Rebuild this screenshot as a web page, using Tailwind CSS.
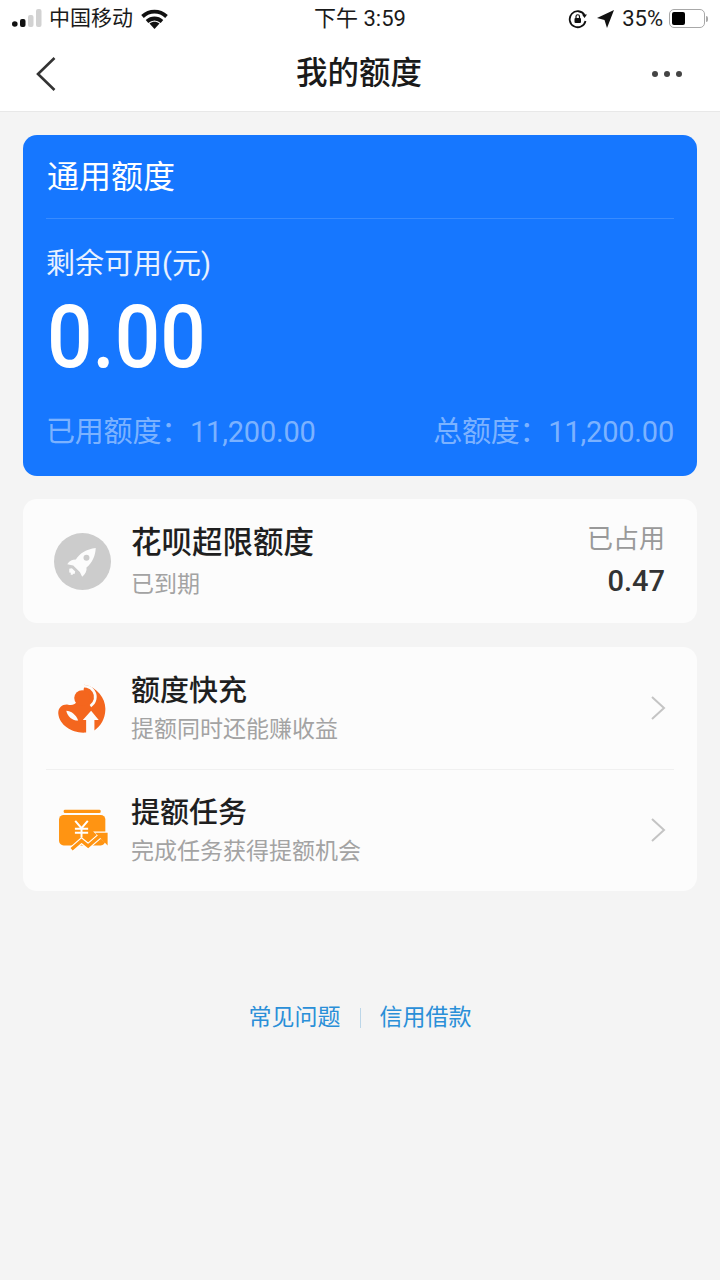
<!DOCTYPE html>
<html lang="zh-CN">
<head>
<meta charset="UTF-8">
<title>我的额度</title>
<script src="https://cdn.jsdelivr.net/npm/@tailwindcss/browser@4"></script>
</head>
<body class="bg-[#f4f4f4] font-['Roboto','Noto_Sans_CJK_SC',sans-serif]">
<div class="w-[720px] h-[1280px] flex flex-col overflow-hidden">

  <!-- status bar + nav -->
  <header class="h-[112px] bg-white border-b border-[#e8e8e8] shrink-0">
    <div class="h-[36px] pt-[1px] grid grid-cols-[1fr_auto_1fr] items-center text-[21px] text-[#1a1a1a]">
      <div class="flex items-center pl-[12px] gap-[7px]">
        <svg width="30" height="20" viewBox="0 0 30 20">
          <circle cx="2.800" cy="15" r="2.800" fill="#111"/>
          <rect x="8" y="10" width="5.500" height="8" rx="2" fill="#111"/>
          <rect x="16" y="6" width="5.500" height="12" rx="2" fill="#d2d2d2"/>
          <rect x="24" y="0" width="5.500" height="18" rx="2" fill="#d2d2d2"/>
        </svg>
        <span class="leading-none">中国移动</span>
        <svg class="ml-[1px]" width="27" height="20" viewBox="0 0 27 20" fill="none" stroke="#111" stroke-width="3.800">
          <path d="M1.500 7.500C8.500 1 18.500 1 25.500 7.500"/>
          <path d="M6 12.500C10.500 8.500 16.500 8.500 21 12.500"/>
          <path d="M13.500 20l-5-5.500c3-2.200 7-2.200 10 0z" fill="#111" stroke="none"/>
        </svg>
      </div>
      <div class="text-center leading-none text-[22px]">下午 3:59</div>
      <div class="flex items-center justify-end pr-[12px]">
        <svg width="20" height="20" viewBox="0 0 20 20" fill="none">
          <path d="M16.500 6A8 8 0 1 0 17.500 12" stroke="#111" stroke-width="1.800"/>
          <path d="M14 5.500h5l-2.500 3.500z" fill="#111"/>
          <rect x="6.500" y="9" width="6.500" height="5" rx="1" fill="#111"/>
          <path d="M8 9V7.500a1.500 1.500 0 0 1 3.500 0V9" stroke="#111" stroke-width="1.200"/>
        </svg>
        <svg class="ml-[9px]" width="17" height="18" viewBox="0 0 17 18"><path d="M17 0L10 18 7.500 10 0 8z" fill="#111"/></svg>
        <span class="leading-none ml-[8px] text-[22px]">35%</span>
        <div class="flex items-center ml-[6px]">
          <div class="w-[36px] h-[19px] border border-[#a8a8a8] rounded-[5px] p-[2px]">
            <div class="w-[13px] h-full bg-black rounded-[2px]"></div>
          </div>
          <div class="w-[2px] h-[6px] bg-[#a8a8a8] rounded-r-full ml-[1px]"></div>
        </div>
      </div>
    </div>
    <div class="h-[75px] grid grid-cols-[1fr_auto_1fr] items-center pl-[36px] pr-[38px]">
      <svg width="20" height="34" viewBox="0 0 20 34" fill="none" stroke="#333" stroke-width="2.600"><path d="M18.500 1L2 17l16.500 16"/></svg>
      <h1 class="text-[31.500px] font-medium text-[#1a1a1a] leading-none">我的额度</h1>
      <div class="flex gap-[6px] justify-end">
        <span class="w-[6px] h-[6px] rounded-full bg-[#444]"></span>
        <span class="w-[6px] h-[6px] rounded-full bg-[#444]"></span>
        <span class="w-[6px] h-[6px] rounded-full bg-[#444]"></span>
      </div>
    </div>
  </header>

  <main class="px-[23px] pt-[23px] flex flex-col gap-[23px]">
    <!-- general quota -->
    <section class="h-[341px] bg-[#1677ff] rounded-[14px] px-[23px] text-white flex flex-col">
      <div class="h-[84px] flex items-center border-b border-white/15 text-[32px] leading-none pl-[1px]">通用额度</div>
      <div class="mt-[31px] text-[29px] leading-none text-white/90">剩余可用(元)</div>
      <div class="mt-[10px] w-fit origin-left scale-x-[0.92] text-[87px] font-medium leading-[96px] pl-[1px]">0.00</div>
      <div class="mt-[27px] flex justify-between text-[29px] leading-[40px] text-white/45">
        <span class="tracking-[-0.200px]">已用额度：11,200.00</span>
        <span class="tracking-[-0.200px]">总额度：11,200.00</span>
      </div>
    </section>

    <!-- huabei -->
    <section class="h-[124px] bg-[#fcfcfc] rounded-[14px] pl-[31px] pr-[32px] flex items-center">
      <svg class="shrink-0" width="57" height="57" viewBox="72 68 172 172">
        <circle cx="158" cy="154" r="86" fill="#cccccc"/>
        <path d="M198 113C170 116 148 130 138 148 128 148 118 152 112 162L130 166 150 186 157 200C166 192 172 182 170 172 188 158 197 135 198 113Z" fill="#fcfcfc"/>
        <circle cx="170" cy="143" r="9" fill="#cccccc"/>
        <path d="M118 176l8-2 10 10-2 8-5-1-1 4-6-2 1-5-5-1z" fill="#fcfcfc"/>
      </svg>
      <div class="ml-[20px] flex-1">
        <div class="text-[30.500px] font-medium text-[#1f1f1f] leading-[40px]">花呗超限额度</div>
        <div class="text-[23px] text-[#a3a3a3] leading-[30px] mt-[7px]">已到期</div>
      </div>
      <div class="text-right">
        <div class="text-[26px] text-[#999] leading-[36px] -mt-[2px]">已占用</div>
        <div class="text-[29px] font-medium text-[#333] leading-[36px] mt-[6px]">0.47</div>
      </div>
    </section>

    <!-- actions -->
    <section class="mt-[1px] h-[244px] bg-[#fcfcfc] rounded-[14px] px-[23px] flex flex-col">
      <div class="h-[123px] pt-[1px] flex items-center border-b border-[#f0f0f0]">
        <svg class="ml-[12px]" width="48" height="50" viewBox="55 40 145 150">
          <path d="M135 42C175 50 200 85 198 118 197 145 185 165 165 180V148H178L155 120 130 148H140V186C100 190 60 165 56 130 54 112 68 100 85 102 92 103 98 104 105 100L128 82Z" fill="#f4661e"/>
          <path d="M118 51.500A32 32 0 0 1 153 106" fill="none" stroke="#fcfcfc" stroke-width="8"/>
          <circle cx="128" cy="82" r="24" fill="#f4661e"/>
          <path d="M80 120C94 120 110 132 116 150 98 150 84 138 80 120Z" fill="#fcfcfc"/>
        </svg>
        <div class="ml-[25px] flex-1">
          <div class="text-[29px] font-medium text-[#1f1f1f] leading-[36px]">额度快充</div>
          <div class="text-[23px] text-[#a3a3a3] leading-[30px] mt-[6px]">提额同时还能赚收益</div>
        </div>
        <svg class="mr-[8px] -mt-[2px]" width="16" height="26" viewBox="0 0 16 26" fill="none" stroke="#c4c4c4" stroke-width="2"><path d="M2 2l12 11L2 24"/></svg>
      </div>
      <div class="h-[121px] flex items-center">
        <svg class="ml-[12px]" width="51" height="43" viewBox="55 40 152 130">
          <rect x="71" y="42" width="112" height="10" rx="4" fill="#ff9412"/>
          <rect x="57" y="58" width="140" height="92" rx="14" fill="#ff9412"/>
          <path d="M106 76l19 22 19-22M105 100h40M105 112h40M125 98v28" fill="none" stroke="#fff" stroke-width="6"/>
          <path d="M95 162l30-26 20 16 35-30" fill="none" stroke="#fff" stroke-width="17"/>
          <path d="M160 108h48v44z" fill="#fff"/>
          <path d="M95 162l30-26 20 16 35-30" fill="none" stroke="#ff9412" stroke-width="10"/>
          <path d="M166 112h38v38z" fill="#ff9412"/>
        </svg>
        <div class="ml-[22px] flex-1">
          <div class="text-[29px] font-medium text-[#1f1f1f] leading-[36px]">提额任务</div>
          <div class="text-[23px] text-[#a3a3a3] leading-[30px] mt-[6px]">完成任务获得提额机会</div>
        </div>
        <svg class="mr-[8px] -mt-[2px]" width="16" height="26" viewBox="0 0 16 26" fill="none" stroke="#c4c4c4" stroke-width="2"><path d="M2 2l12 11L2 24"/></svg>
      </div>
    </section>

    <!-- footer links -->
    <nav class="mt-[92px] flex items-center justify-center text-[23px] text-[#2a8fd8] leading-none">
      <span>常见问题</span>
      <span class="w-px h-[20px] bg-[#bcd6e8] mx-[19px]"></span>
      <span>信用借款</span>
    </nav>
  </main>
</div>
</body>
</html>
